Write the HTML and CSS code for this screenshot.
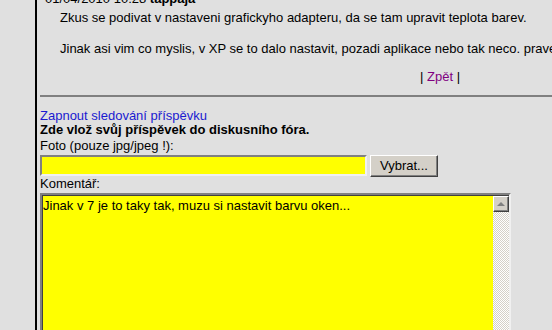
FILE: index.html
```html
<!DOCTYPE html>
<html lang="cs">
<head>
    <meta charset="UTF-8">
    <meta name="viewport" content="width=device-width, initial-scale=1.0">
    <title>Diskuse</title>
    <link rel="stylesheet" href="styles.css">
</head>
<body>
    <div class="page">
        <!-- Posledni prispevek -->
        <div class="post">
            <div class="post-head">01/04/2010 10:28 <b>tappaja</b></div>
            <div class="post-body">
                Zkus se podivat v nastaveni grafickyho adapteru, da se tam upravit teplota barev.<br><br>
                Jinak asi vim co myslis, v XP se to dalo nastavit, pozadi aplikace nebo tak neco. prave tohle mi chybi.
            </div>
            <div class="post-nav">| <a href="#" class="back">Zpět</a> |</div>
        </div>

        <div class="divider"></div>

        <!-- Formular pro novy prispevek -->
        <form class="reply">
            <a href="#" class="follow">Zapnout sledování příspěvku</a>
            <div class="reply-title">Zde vlož svůj příspěvek do diskusního fóra.</div>
            <label class="label label-photo">Foto (pouze jpg/jpeg !):</label>
            <div class="file-row">
                <input type="text" class="file-input">
                <button type="button" class="file-button">Vybrat...</button>
            </div>
            <label class="label">Komentář:</label>
            <div class="comment">
                <textarea class="comment-text">Jinak v 7 je to taky tak, muzu si nastavit barvu oken...</textarea>
                <div class="scrollbar">
                    <span class="scroll-up"></span>
                </div>
            </div>
        </form>
    </div>
</body>
</html>
```

FILE: styles.css
```css
html, body {
    margin: 0;
    padding: 0;
    height: 100%;
    overflow: hidden;
}

body {
    font-family: "Liberation Sans", Arial, sans-serif;
    font-size: 13px;
    background-color: #e0e0e0;
    color: #000;
}

.page {
    margin-left: 35px;
    border-left: 2px solid #000;
    padding-left: 3px;
    min-height: 100%;
}

.post {
    margin-top: -9px;
    line-height: 15px;
}

.post-head {
    padding-left: 5px;
}

.post-body {
    margin-top: 4px;
    padding-left: 20px;
    line-height: 15.5px;
    white-space: nowrap;
}

.post-nav {
    margin-top: 12px;
    padding-left: 380px;
}

.back {
    color: #800080;
    text-decoration: none;
}

.divider {
    height: 2px;
    background-color: #808080;
    margin-top: 11px;
}

.reply {
    display: flex;
    flex-direction: column;
    align-items: flex-start;
    margin-top: 12px;
    line-height: 14px;
}

.follow {
    color: #1a1ad0;
    text-decoration: none;
}

.reply-title {
    font-weight: bold;
}

.label {
    display: block;
}

.label-photo {
    margin-top: 2px;
}

.file-row {
    display: flex;
    gap: 3px;
    margin-top: 2px;
}

.file-input {
    width: 319px;
    height: 17px;
    margin: 0;
    padding: 0 2px;
    background-color: #ffff00;
    border: 2px solid;
    border-color: #808080 #f0f0f0 #f0f0f0 #808080;
    font: inherit;
}

.file-button {
    width: 68px;
    height: 22px;
    margin: 0;
    padding: 0;
    background-color: #d4d0c8;
    border: 1px solid;
    border-color: #ffffff #404040 #404040 #ffffff;
    box-shadow: inset -1px -1px 0 #808080;
    font: inherit;
    color: #000;
}

.comment {
    display: flex;
    width: 467px;
    height: 200px;
    margin-top: 2px;
    border: 2px solid;
    border-color: #808080 #f0f0f0 #f0f0f0 #808080;
    background-color: #ffff00;
}

.comment-text {
    flex: 1;
    margin: 0;
    padding: 2px 0;
    border: none;
    border-top: 1px solid #404040;
    border-left: 1px solid #404040;
    background-color: #ffff00;
    font: inherit;
    line-height: 15px;
    resize: none;
    outline: none;
    overflow: hidden;
}

.scrollbar {
    width: 16px;
    border-top: 1px solid #404040;
    background-color: #ffffff;
    background-image: repeating-conic-gradient(#d4d0c8 0 25%, #ffffff 0 50%);
    background-size: 2px 2px;
}

.scroll-up {
    display: block;
    position: relative;
    width: 14px;
    height: 14px;
    background-color: #d4d0c8;
    border: 1px solid;
    border-color: #ffffff #404040 #404040 #ffffff;
    box-shadow: inset -1px -1px 0 #808080;
}

.scroll-up::after {
    content: "";
    position: absolute;
    left: 3px;
    top: 5px;
    border-left: 4px solid transparent;
    border-right: 4px solid transparent;
    border-bottom: 4px solid #808080;
}
```
